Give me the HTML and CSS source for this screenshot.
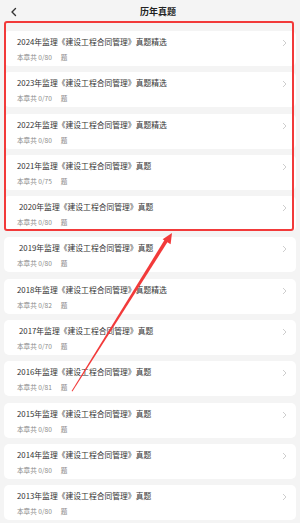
FILE: index.html
```html
<!DOCTYPE html>
<html lang="zh">
<head>
<meta charset="utf-8">
<title>历年真题</title>
<link rel="stylesheet" href="styles.css">
</head>
<body>
<div class="page">
  <header class="topbar">
    <svg class="back" width="8" height="10" viewBox="0 0 8 10"><polyline points="5.5,1.5 2,5 5.5,8.5" fill="none" stroke="#333" stroke-width="1.4" stroke-linecap="round" stroke-linejoin="round"/></svg>
    <h1 class="title">历年真题</h1>
    <span></span>
  </header>
  <main class="list">
    <div class="card"><div class="body"><div class="name">2024年监理《建设工程合同管理》真题精选</div><div class="meta">本章共 0/80<span class="unit">题</span></div></div><svg class="chev" width="5" height="8" viewBox="0 0 5 8"><polyline points="1,1 4,4 1,7" fill="none" stroke="#c8c8c8" stroke-width="0.9"/></svg></div>
    <div class="card"><div class="body"><div class="name">2023年监理《建设工程合同管理》真题精选</div><div class="meta">本章共 0/70<span class="unit">题</span></div></div><svg class="chev" width="5" height="8" viewBox="0 0 5 8"><polyline points="1,1 4,4 1,7" fill="none" stroke="#c8c8c8" stroke-width="0.9"/></svg></div>
    <div class="card"><div class="body"><div class="name">2022年监理《建设工程合同管理》真题精选</div><div class="meta">本章共 0/80<span class="unit">题</span></div></div><svg class="chev" width="5" height="8" viewBox="0 0 5 8"><polyline points="1,1 4,4 1,7" fill="none" stroke="#c8c8c8" stroke-width="0.9"/></svg></div>
    <div class="card"><div class="body"><div class="name">2021年监理《建设工程合同管理》真题</div><div class="meta">本章共 0/75<span class="unit">题</span></div></div><svg class="chev" width="5" height="8" viewBox="0 0 5 8"><polyline points="1,1 4,4 1,7" fill="none" stroke="#c8c8c8" stroke-width="0.9"/></svg></div>
    <div class="card"><div class="body"><div class="name ind">2020年监理《建设工程合同管理》真题</div><div class="meta">本章共 0/80<span class="unit">题</span></div></div><svg class="chev" width="5" height="8" viewBox="0 0 5 8"><polyline points="1,1 4,4 1,7" fill="none" stroke="#c8c8c8" stroke-width="0.9"/></svg></div>
    <div class="card"><div class="body"><div class="name ind">2019年监理《建设工程合同管理》真题</div><div class="meta">本章共 0/80<span class="unit">题</span></div></div><svg class="chev" width="5" height="8" viewBox="0 0 5 8"><polyline points="1,1 4,4 1,7" fill="none" stroke="#c8c8c8" stroke-width="0.9"/></svg></div>
    <div class="card"><div class="body"><div class="name">2018年监理《建设工程合同管理》真题精选</div><div class="meta">本章共 0/82<span class="unit">题</span></div></div><svg class="chev" width="5" height="8" viewBox="0 0 5 8"><polyline points="1,1 4,4 1,7" fill="none" stroke="#c8c8c8" stroke-width="0.9"/></svg></div>
    <div class="card"><div class="body"><div class="name ind">2017年监理《建设工程合同管理》真题</div><div class="meta">本章共 0/70<span class="unit">题</span></div></div><svg class="chev" width="5" height="8" viewBox="0 0 5 8"><polyline points="1,1 4,4 1,7" fill="none" stroke="#c8c8c8" stroke-width="0.9"/></svg></div>
    <div class="card"><div class="body"><div class="name">2016年监理《建设工程合同管理》真题</div><div class="meta">本章共 0/81<span class="unit">题</span></div></div><svg class="chev" width="5" height="8" viewBox="0 0 5 8"><polyline points="1,1 4,4 1,7" fill="none" stroke="#c8c8c8" stroke-width="0.9"/></svg></div>
    <div class="card"><div class="body"><div class="name">2015年监理《建设工程合同管理》真题</div><div class="meta">本章共 0/80<span class="unit">题</span></div></div><svg class="chev" width="5" height="8" viewBox="0 0 5 8"><polyline points="1,1 4,4 1,7" fill="none" stroke="#c8c8c8" stroke-width="0.9"/></svg></div>
    <div class="card"><div class="body"><div class="name">2014年监理《建设工程合同管理》真题</div><div class="meta">本章共 0/80<span class="unit">题</span></div></div><svg class="chev" width="5" height="8" viewBox="0 0 5 8"><polyline points="1,1 4,4 1,7" fill="none" stroke="#c8c8c8" stroke-width="0.9"/></svg></div>
    <div class="card"><div class="body"><div class="name">2013年监理《建设工程合同管理》真题</div><div class="meta">本章共 0/80<span class="unit">题</span></div></div><svg class="chev" width="5" height="8" viewBox="0 0 5 8"><polyline points="1,1 4,4 1,7" fill="none" stroke="#c8c8c8" stroke-width="0.9"/></svg></div>
  </main>
  <div class="highlight"></div>
  <svg class="arrow" width="300" height="523" viewBox="0 0 300 523">
    <polygon points="71.6,391 72.4,391.4 168.5,240.6 165.4,238.6" fill="#f23a3a"/>
    <polygon points="172,233 170.6,244.2 162.6,239.2" fill="#f23a3a"/>
  </svg>
</div>
</body>
</html>
```

FILE: styles.css
```css
* { box-sizing: border-box; margin: 0; padding: 0; }
html, body { width: 300px; height: 523px; overflow: hidden; }
body {
  background: #f4f4f4;
  font-family: "Noto Sans CJK SC", "Noto Sans", sans-serif;
  color: #333;
}
.page { position: relative; width: 300px; height: 523px; }
.topbar {
  height: 26px;
  display: grid;
  grid-template-columns: 1fr auto 1fr;
  align-items: center;
  padding: 0 0 2px 10px;
}
.back { display: block; }
.title {
  font-size: 9px;
  font-weight: 700;
  color: #222;
  line-height: 12px;
  padding-left: 6px;
}
.list {
  padding: 5px 4px 0;
  display: flex;
  flex-direction: column;
  gap: 6.3px;
}
.card {
  background: #fff;
  border-radius: 5px;
  height: 35px;
  display: flex;
  justify-content: space-between;
  align-items: flex-start;
  padding: 5px 9px 0 13px;
}
.name {
  font-size: 7.8px;
  line-height: 12px;
  color: #333;
  white-space: nowrap;
}
.name.ind { padding-left: 2px; }
.meta {
  margin-top: 4px;
  font-size: 6.6px;
  line-height: 10px;
  color: #8a8a8a;
  white-space: nowrap;
}
.unit { margin-left: 9px; }
.chev { display: block; margin-top: 3px; }
.highlight {
  position: absolute;
  left: 4px;
  top: 21px;
  width: 290px;
  height: 210px;
  border: 2.6px solid #f23a3a;
  border-radius: 3px;
}
.arrow { position: absolute; left: 0; top: 0; }
```
